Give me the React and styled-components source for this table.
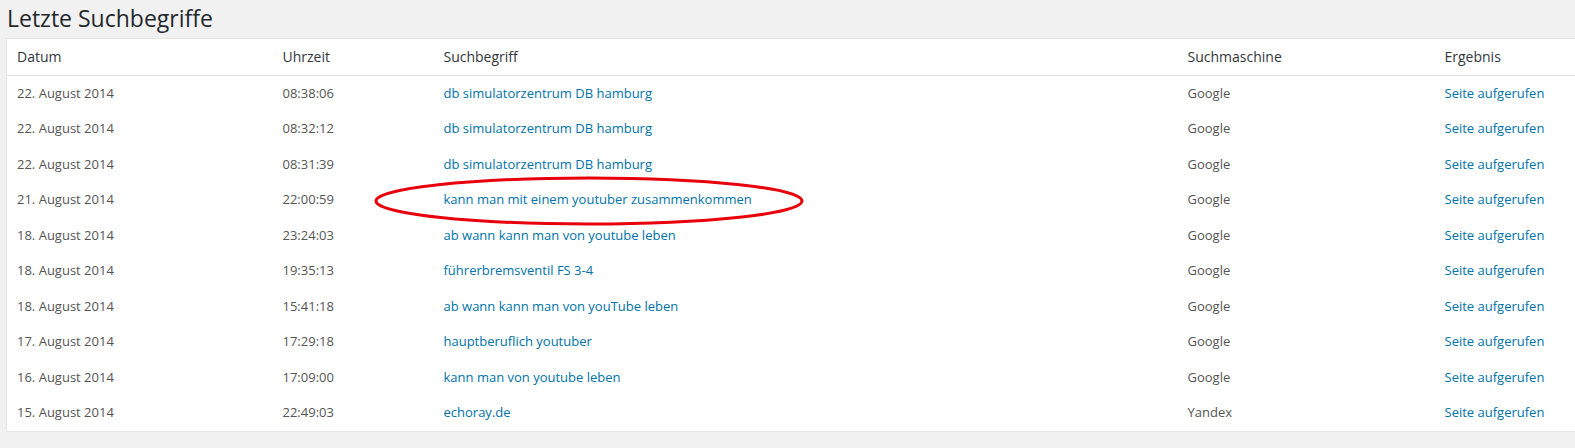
import React from 'react';
import styled, { createGlobalStyle } from 'styled-components';

const GlobalStyle = createGlobalStyle`
  body {
    margin: 0;
    background: #f1f1f1;
    font-family: "Open Sans", "Liberation Sans", sans-serif;
    overflow: hidden;
  }
`;

const Page = styled.div`
  padding: 0 0 0 6px;
`;

const Title = styled.h2`
  margin: 0;
  padding: 3px 0 0 1px;
  height: 35px;
  font-size: 23px;
  font-weight: 400;
  line-height: 30px;
  color: #23282d;
`;

const Box = styled.div`
  position: relative;
  width: 1590px;
`;

const Table = styled.table`
  width: 100%;
  table-layout: fixed;
  border-collapse: collapse;
  background: #fff;
  border: 1px solid #e5e5e5;
  box-shadow: 0 1px 1px rgba(0, 0, 0, 0.04);
`;

const Th = styled.th`
  text-align: left;
  font-weight: 400;
  font-size: 14px;
  line-height: 19.6px;
  padding: 8px 10px;
  color: #32373c;
  border-bottom: 1px solid #e1e1e1;
`;

const Td = styled.td`
  font-size: 13px;
  line-height: 19.5px;
  padding: 8px 10px;
  color: ${p => (p.$link ? '#0073aa' : '#555')};
  white-space: nowrap;
`;

const Mark = styled.svg`
  position: absolute;
  left: 0;
  top: 0;
  pointer-events: none;
`;

const rows = [
  ['22. August 2014', '08:38:06', 'db simulatorzentrum DB hamburg', 'Google'],
  ['22. August 2014', '08:32:12', 'db simulatorzentrum DB hamburg', 'Google'],
  ['22. August 2014', '08:31:39', 'db simulatorzentrum DB hamburg', 'Google'],
  ['21. August 2014', '22:00:59', 'kann man mit einem youtuber zusammenkommen', 'Google'],
  ['18. August 2014', '23:24:03', 'ab wann kann man von youtube leben', 'Google'],
  ['18. August 2014', '19:35:13', 'führerbremsventil FS 3-4', 'Google'],
  ['18. August 2014', '15:41:18', 'ab wann kann man von youTube leben', 'Google'],
  ['17. August 2014', '17:29:18', 'hauptberuflich youtuber', 'Google'],
  ['16. August 2014', '17:09:00', 'kann man von youtube leben', 'Google'],
  ['15. August 2014', '22:49:03', 'echoray.de', 'Yandex'],
];

export default function App() {
  return (
    <Page>
      <GlobalStyle />
      <Title>Letzte Suchbegriffe</Title>
      <Box>
        <Table>
          <colgroup>
            <col style={{ width: 266 }} />
            <col style={{ width: 161 }} />
            <col style={{ width: 744 }} />
            <col style={{ width: 257 }} />
            <col />
          </colgroup>
          <thead>
            <tr>
              <Th>Datum</Th>
              <Th>Uhrzeit</Th>
              <Th>Suchbegriff</Th>
              <Th>Suchmaschine</Th>
              <Th>Ergebnis</Th>
            </tr>
          </thead>
          <tbody>
            {rows.map((r, i) => (
              <tr key={i}>
                <Td>{r[0]}</Td>
                <Td>{r[1]}</Td>
                <Td $link>{r[2]}</Td>
                <Td>{r[3]}</Td>
                <Td $link>Seite aufgerufen</Td>
              </tr>
            ))}
          </tbody>
        </Table>
        <Mark width="900" height="260">
          <ellipse cx="583" cy="163" rx="213" ry="23" fill="none" stroke="#e8000b" strokeWidth="3" />
        </Mark>
      </Box>
    </Page>
  );
}
